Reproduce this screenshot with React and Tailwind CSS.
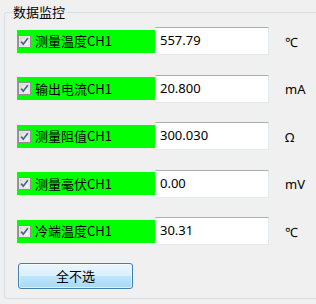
import React from "react";

const rows = [
  { label: "测量温度CH1", value: "557.79", unit: "℃" },
  { label: "输出电流CH1", value: "20.800", unit: "mA" },
  { label: "测量阻值CH1", value: "300.030", unit: "Ω" },
  { label: "测量毫伏CH1", value: "0.00", unit: "mV" },
  { label: "冷端温度CH1", value: "30.31", unit: "℃" },
];

function Check() {
  return (
    <svg width="13" height="13" viewBox="0 0 13 13" className="shrink-0">
      <defs>
        <linearGradient id="cbg" x1="0" y1="0" x2="1" y2="1">
          <stop offset="0" stopColor="#dcdcdc" />
          <stop offset="1" stopColor="#fbfbfb" />
        </linearGradient>
      </defs>
      <rect x="0.5" y="0.5" width="12" height="12" fill="#f4f4f4" stroke="#8e8f8f" />
      <rect x="2" y="2" width="9" height="9" fill="url(#cbg)" stroke="#c8c8c8" strokeWidth="0.6" />
      <path d="M3.2 6.6 L5.3 9.2 L9.8 3.3" fill="none" stroke="#4a5f97" strokeWidth="1.7" />
    </svg>
  );
}

export default function App() {
  return (
    <div
      className="w-[316px] h-[304px] bg-[#f0f0f0] overflow-hidden pt-[12px] pl-[4px]"
      style={{ fontFamily: '"Noto Sans CJK SC", "Noto Sans", sans-serif' }}
    >
      <div className="relative w-[330px] h-[287px] border-t border-l border-b border-[#d5dfe5] rounded-[3px]">
        <div className="absolute left-[7px] top-[-11px] px-[1px] bg-[#f0f0f0] text-[13px] leading-[20px] text-black">
          数据监控
        </div>
        <div className="flex flex-col gap-[19.5px] pt-[14px] pl-[12px]">
          {rows.map((r) => (
            <div key={r.label} className="flex items-center h-[28px]">
              <div className="flex items-center w-[138px] h-[23px] bg-[#00ff00] pl-[1px] gap-[4px]">
                <Check />
                <span className="text-[13px] leading-[18px] text-black">{r.label}</span>
              </div>
              <div
                className="flex items-center w-[114px] h-[28px] bg-white border border-[#e3e9ef] border-t-[#abadb3] pl-[4px] text-[13px] text-black"
                style={{ fontFamily: '"Noto Sans", sans-serif' }}
              >
                {r.value}
              </div>
              <div
                className="ml-[16px] pt-[3px] text-[13px] text-black"
                style={{ fontFamily: '"Noto Sans", "DejaVu Sans", sans-serif' }}
              >
                {r.unit}
              </div>
            </div>
          ))}
        </div>
        <button className="ml-[13px] mt-[18px] w-[115px] h-[26px] rounded-[3px] border border-[#3c7fb1] bg-[linear-gradient(to_bottom,#eaf6fd_0%,#d9f0fc_50%,#bee6fd_51%,#a7d9f5_100%)] shadow-[inset_0_0_0_1px_#ffffffa0] text-[13px] text-black flex items-center justify-center">
          全不选
        </button>
      </div>
    </div>
  );
}
